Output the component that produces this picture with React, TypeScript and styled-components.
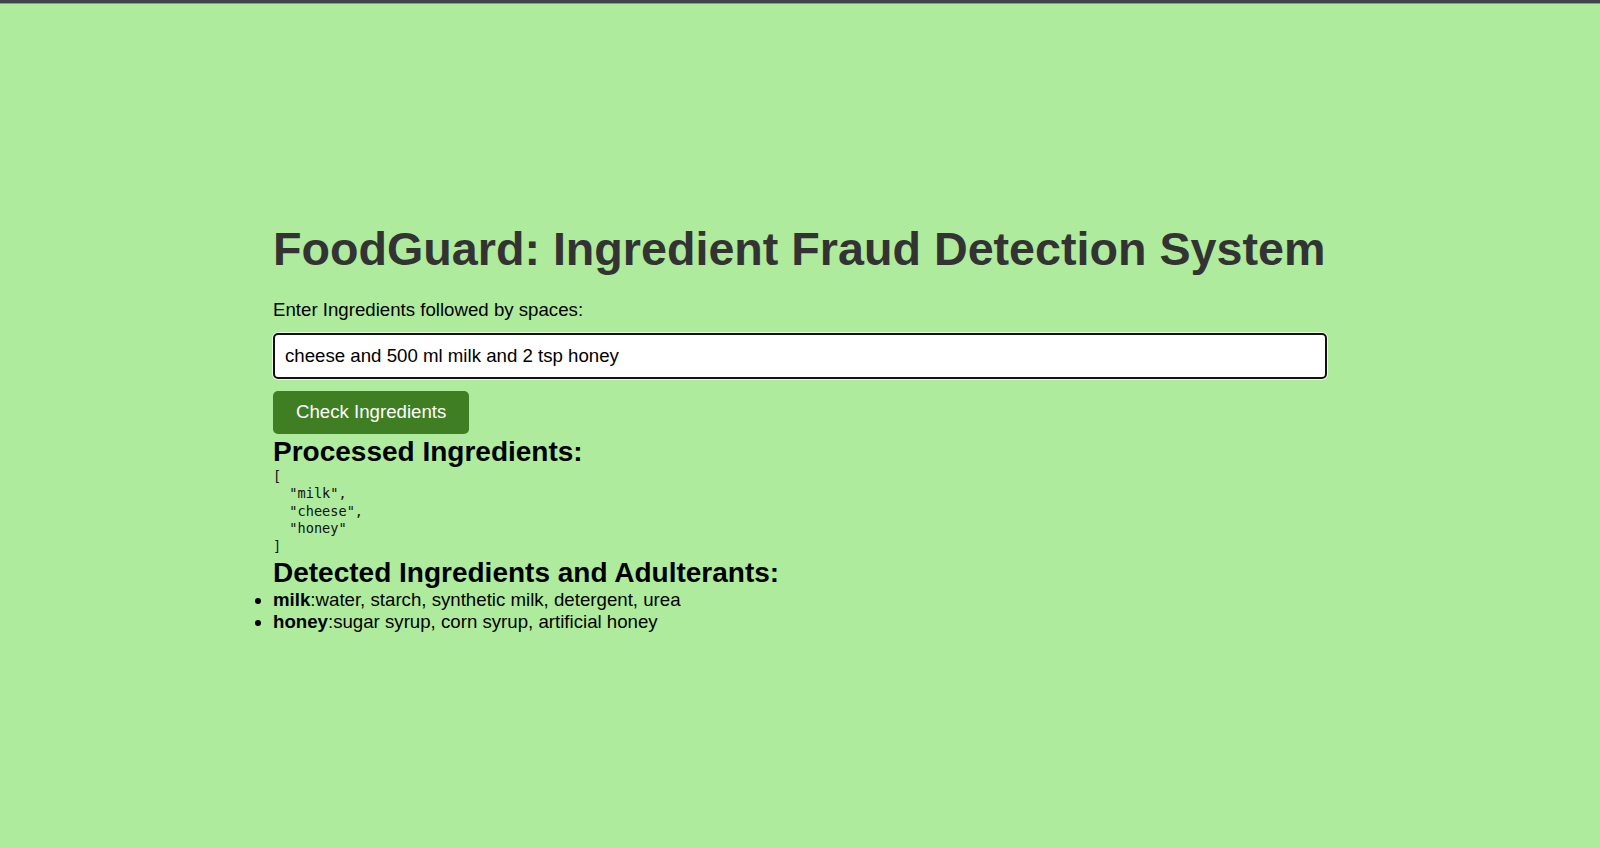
import React from "react";
import styled, { createGlobalStyle } from "styled-components";

const GlobalStyle = createGlobalStyle`
  html, body {
    margin: 0;
    padding: 0;
  }
  body {
    background: #aeeb9c;
    font-family: "Liberation Sans", Arial, sans-serif;
    font-size: 18.67px;
    color: #000;
  }
`;

const Page = styled.div`
  min-height: 100vh;
  display: flex;
  flex-direction: column;
`;

const TopBar = styled.div`
  height: 3px;
  background: #3e444e;
  border-bottom: 1px solid #8a9c86;
`;

const Main = styled.main`
  width: 1054px;
  margin: 0 auto;
  padding-top: 218px;
  display: flex;
  flex-direction: column;
  align-items: flex-start;
`;

const Title = styled.h1`
  margin: 0 0 23px;
  font-size: 46.67px;
  line-height: normal;
  font-weight: bold;
  color: #333;
  white-space: nowrap;
`;

const Label = styled.label`
  display: block;
  margin-bottom: 11.5px;
  font-size: 18.67px;
  line-height: normal;
`;

const Input = styled.input`
  box-sizing: border-box;
  width: 100%;
  height: 46px;
  margin: 0 0 12px;
  padding: 0 10px;
  border: 2px solid #121212;
  border-radius: 5px;
  box-shadow: 0 0 0 1px rgba(255, 255, 255, 0.7);
  background: #fff;
  font-family: "Liberation Sans", Arial, sans-serif;
  font-size: 18.67px;
  color: #000;
  outline: none;
`;

const Button = styled.button`
  box-sizing: border-box;
  height: 43.6px;
  padding: 0 23px;
  border: none;
  border-radius: 5px;
  background: #3f7e23;
  color: #fff;
  font-family: "Liberation Sans", Arial, sans-serif;
  font-size: 18.67px;
  cursor: pointer;
`;

const SectionHeading = styled.h2`
  margin: 1.5px 0 0;
  font-size: 28px;
  line-height: normal;
  font-weight: bold;
  color: #000;
`;

const Code = styled.pre`
  margin: 0;
  font-family: "DejaVu Sans Mono", "Liberation Mono", monospace;
  font-size: 13.6px;
  line-height: 17.6px;
  color: #111;
`;

const List = styled.ul`
  margin: 0;
  padding: 0;
  list-style: disc outside;
`;

const Item = styled.li`
  font-size: 18.67px;
  line-height: normal;
`;

const Name = styled.strong`
  font-weight: bold;
`;

const processed = ["milk", "cheese", "honey"];

const detected: { name: string; adulterants: string[] }[] = [
  { name: "milk", adulterants: ["water", "starch", "synthetic milk", "detergent", "urea"] },
  { name: "honey", adulterants: ["sugar syrup", "corn syrup", "artificial honey"] },
];

export default function App() {
  return (
    <>
      <GlobalStyle />
      <Page>
        <TopBar />
        <Main>
          <Title>FoodGuard: Ingredient Fraud Detection System</Title>
          <Label htmlFor="ingredients">Enter Ingredients followed by spaces:</Label>
          <Input
            id="ingredients"
            type="text"
            defaultValue="cheese and 500 ml milk and 2 tsp honey"
          />
          <Button type="button">Check Ingredients</Button>
          <SectionHeading>Processed Ingredients:</SectionHeading>
          <Code>{JSON.stringify(processed, null, 2)}</Code>
          <SectionHeading>Detected Ingredients and Adulterants:</SectionHeading>
          <List>
            {detected.map((d) => (
              <Item key={d.name}>
                <Name>{d.name}</Name>:{d.adulterants.join(", ")}
              </Item>
            ))}
          </List>
        </Main>
      </Page>
    </>
  );
}
